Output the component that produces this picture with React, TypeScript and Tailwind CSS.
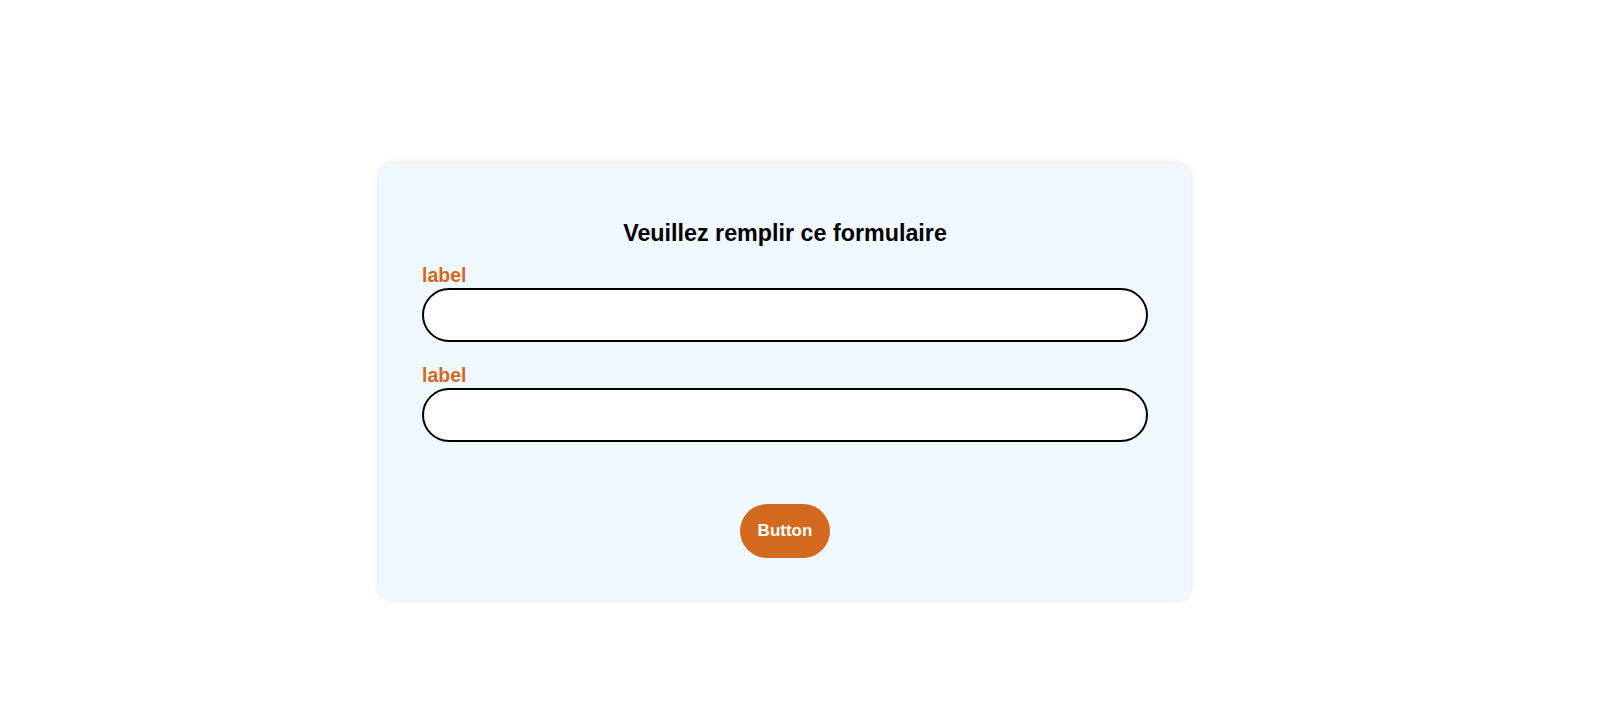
import * as React from "react";

function Field({ label, className }: { label: string; className?: string }) {
  return (
    <div className={`flex flex-col ${className ?? ""}`}>
      <label className="text-[19.5px] font-bold leading-[22px] text-[#d2691e]">{label}</label>
      <input
        type="text"
        className="mt-[2px] h-[54px] w-full rounded-full border-2 border-black bg-white px-5 text-base outline-none"
      />
    </div>
  );
}

export default function App() {
  return (
    <div className="min-h-[728px] w-full bg-white pl-[379px] pt-[163px] font-['Liberation_Sans',Arial,sans-serif]">
      <form
        className="flex w-[812px] flex-col rounded-[14px] bg-[#f0f8ff] px-[43px] pb-[42px] pt-[57px] shadow-[0_0_6px_rgba(0,0,0,0.12)]"
        onSubmit={(e) => e.preventDefault()}
      >
        <h2 className="mb-[17px] text-center text-[23.3px] font-bold leading-[27px] text-black">
          Veuillez remplir ce formulaire
        </h2>
        <Field label="label" />
        <Field label="label" className="mt-[22px]" />
        <div className="mt-[62px] flex justify-center">
          <button
            type="submit"
            className="h-[54px] rounded-full bg-[#d2691e] px-[18px] text-[17px] font-bold text-white"
          >
            Button
          </button>
        </div>
      </form>
    </div>
  );
}
